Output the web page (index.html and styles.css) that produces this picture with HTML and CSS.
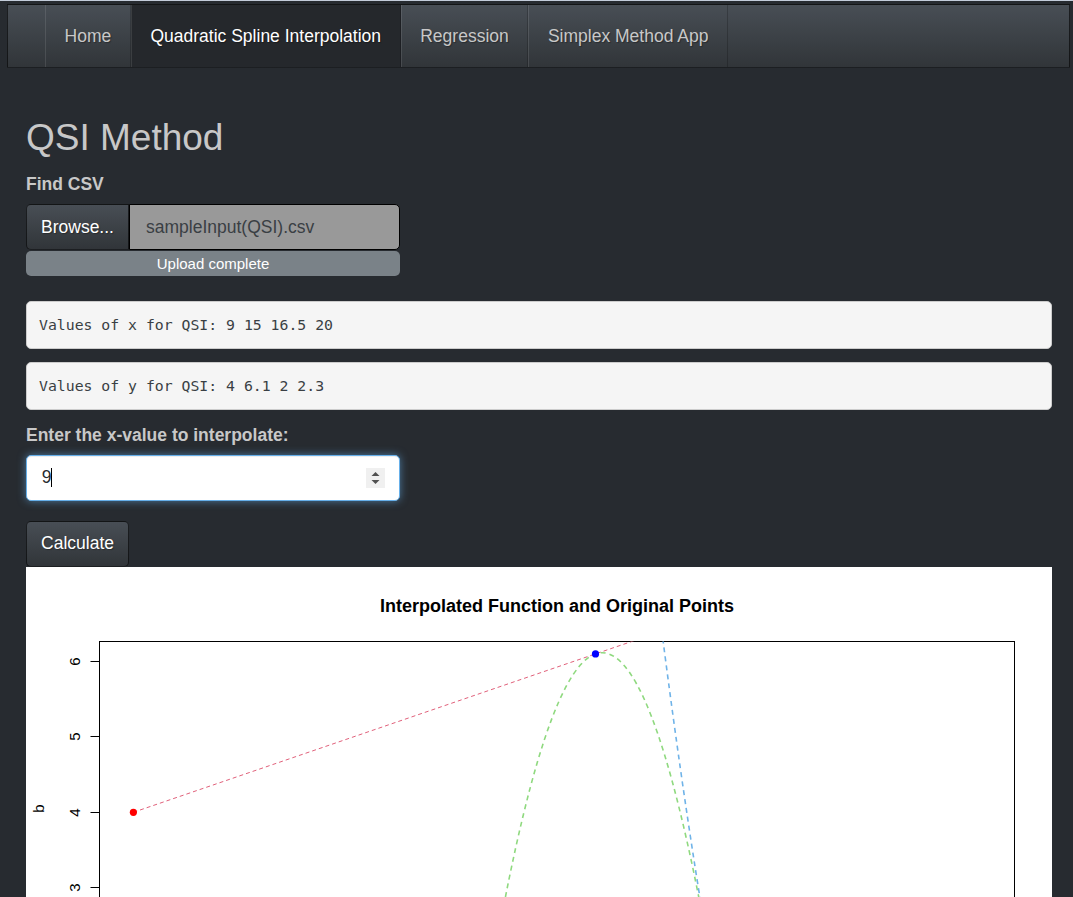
FILE: index.html
```html
<!DOCTYPE html>
<html lang="en">
<head>
<meta charset="utf-8">
<title>QSI Method</title>
<link rel="stylesheet" href="styles.css">
</head>
<body>
<nav class="navbar">
  <div class="navbar-brand"></div>
  <ul class="nav">
    <li class="nav-item"><a href="#">Home</a></li>
    <li class="nav-item active"><a href="#">Quadratic Spline Interpolation</a></li>
    <li class="nav-item"><a href="#">Regression</a></li>
    <li class="nav-item"><a href="#">Simplex Method App</a></li>
  </ul>
</nav>
<main class="container">
  <h1 class="page-title">QSI Method</h1>
  <div class="form-group file-form">
    <label class="control-label">Find CSV</label>
    <div class="file-group">
      <span class="btn btn-browse">Browse...</span>
      <div class="file-name">sampleInput(QSI).csv</div>
    </div>
    <div class="progress">Upload complete</div>
  </div>
  <pre class="verbatim">Values of x for QSI: 9 15 16.5 20</pre>
  <pre class="verbatim">Values of y for QSI: 4 6.1 2 2.3</pre>
  <div class="form-group num-form">
    <label class="control-label">Enter the x-value to interpolate:</label>
    <div class="num-input">
      <span class="num-value">9</span><span class="caret"></span>
      <svg class="spinner" width="19" height="20" viewBox="0 0 19 20">
        <rect x="0" y="0" width="19" height="20" fill="#f0f0f0"/>
        <polygon points="5.5,8 13.5,8 9.5,4" fill="#505050"/>
        <polygon points="5.5,12 13.5,12 9.5,16" fill="#505050"/>
      </svg>
    </div>
  </div>
  <button class="btn btn-calc" type="button">Calculate</button>
  <div class="plot">
    <svg class="plot-svg" width="1026" height="500" viewBox="0 0 1026 500">
      <defs>
        <clipPath id="plotclip"><rect x="73.5" y="74.5" width="915" height="334"/></clipPath>
      </defs>
      <text class="plot-title" x="531" y="45" text-anchor="middle">Interpolated Function and Original Points</text>
      <rect x="73.5" y="74.5" width="915" height="334" fill="none" stroke="#000" stroke-width="1"/>
      <g stroke="#000" stroke-width="1">
        <line x1="73.5" y1="94.5" x2="73.5" y2="396.5"/>
        <line x1="64.5" y1="94.5" x2="73.5" y2="94.5"/>
        <line x1="64.5" y1="169.5" x2="73.5" y2="169.5"/>
        <line x1="64.5" y1="245.5" x2="73.5" y2="245.5"/>
        <line x1="64.5" y1="320.5" x2="73.5" y2="320.5"/>
        <line x1="64.5" y1="396.5" x2="73.5" y2="396.5"/>
      </g>
      <g class="axis-label" text-anchor="middle">
        <text transform="translate(53.5,94.5) rotate(-90)">6</text>
        <text transform="translate(53.5,169.5) rotate(-90)">5</text>
        <text transform="translate(53.5,245.5) rotate(-90)">4</text>
        <text transform="translate(53.5,320.5) rotate(-90)">3</text>
        <text transform="translate(17.5,241.5) rotate(-90)">b</text>
      </g>
      <g clip-path="url(#plotclip)" fill="none">
        <line x1="107.4" y1="245.3" x2="954.6" y2="-45.1" stroke="#e0607a" stroke-width="1" stroke-dasharray="4 3"/>
        <path d="M461.7 427.7 Q575.3 -251.6 688.9 418.5" stroke="#8fd97f" stroke-width="1.6" stroke-dasharray="5 4"/>
        <path d="M631.1 26.7 Q661.9 273.4 692.7 438.7" stroke="#6fb3e8" stroke-width="1.6" stroke-dasharray="5 4"/>
      </g>
      <g>
        <circle cx="569.5" cy="86.9" r="3.6" fill="#0000FF"/>
        <circle cx="685.0" cy="396.1" r="3.6" fill="#0000FF"/>
        <circle cx="954.6" cy="373.5" r="3.6" fill="#0000FF"/>
        <circle cx="107.4" cy="245.3" r="3.6" fill="#FF0000"/>
      </g>
    </svg>
  </div>
</main>
</body>
</html>
```
FILE: styles.css
```css
html {
  overflow: hidden;
}

body {
  margin: 0;
  background: #272b30;
  color: #c8c8c8;
  font-family: "Liberation Sans", Arial, sans-serif;
  font-size: 17.5px;
  line-height: 1.42857;
  border-top: 1px solid #c3ccda;
}

.navbar {
  display: flex;
  height: 64px;
  box-sizing: border-box;
  margin: 3px 3px 0 7px;
  border: 1px solid rgba(0, 0, 0, 0.6);
  background-image: linear-gradient(#484e55, #3a3f44 60%, #313539);
}

.navbar-brand {
  width: 37px;
  flex: none;
}

.nav {
  display: flex;
  list-style: none;
  margin: 0;
  padding: 0;
}

.nav-item a {
  display: block;
  padding: 0 18.6px;
  line-height: 62px;
  color: #c8c8c8;
  text-decoration: none;
  border-left: 1px solid rgba(255, 255, 255, 0.1);
  border-right: 1px solid rgba(0, 0, 0, 0.2);
  text-shadow: 1px 1px 1px rgba(0, 0, 0, 0.3);
}

.nav-item.active a {
  color: #fff;
  background: #25282c;
}

.container {
  padding: 0 21px 0 26px;
}

.page-title {
  font-size: 37px;
  font-weight: 400;
  line-height: 1.1;
  margin: 49.5px 0 13.5px;
  color: #c8c8c8;
}

.control-label {
  display: block;
  font-weight: bold;
  margin-bottom: 6.5px;
}

.file-form .control-label {
  margin-bottom: 7.5px;
}

.file-form {
  margin-bottom: 25px;
}

.file-group {
  display: flex;
  width: 374px;
  height: 46px;
}

.btn {
  box-sizing: border-box;
  border: 1px solid rgba(0, 0, 0, 0.6);
  background-image: linear-gradient(#484e55, #3a3f44 60%, #313539);
  color: #fff;
  font-family: "Liberation Sans", Arial, sans-serif;
  font-size: 17.5px;
  text-shadow: 1px 1px 1px rgba(0, 0, 0, 0.3);
  display: flex;
  align-items: center;
  justify-content: center;
}

.btn-browse {
  width: 103px;
  flex: none;
  border-radius: 5px 0 0 5px;
}

.file-name {
  flex: 1;
  box-sizing: border-box;
  background: #999999;
  border: 1px solid #000;
  border-radius: 0 5px 5px 0;
  padding-left: 16px;
  color: #3a3f44;
  display: flex;
  align-items: center;
}

.progress {
  margin-top: 1px;
  width: 374px;
  height: 25px;
  line-height: 25px;
  border-radius: 5px;
  background: #7a8288;
  color: #fff;
  font-size: 15px;
  text-align: center;
}

.verbatim {
  box-sizing: border-box;
  height: 48px;
  margin: 0 0 13px;
  padding: 11px 12px;
  line-height: 24px;
  font-family: "DejaVu Sans Mono", "Liberation Mono", monospace;
  font-size: 14.8px;
  background: #f5f5f5;
  border: 1px solid #cccccc;
  border-radius: 5px;
  color: #3a3f44;
  white-space: pre;
}

.num-form {
  margin-bottom: 20px;
}

.num-input {
  box-sizing: border-box;
  width: 374px;
  height: 46px;
  border: 1px solid #66afe9;
  border-radius: 5px;
  background: #fff;
  box-shadow: inset 0 1px 1px rgba(0, 0, 0, 0.075), 0 0 8px rgba(102, 175, 233, 0.6);
  display: flex;
  align-items: center;
  padding: 0 14px 0 14.7px;
  color: #272b30;
}

.caret {
  width: 1px;
  height: 19px;
  background: #000;
}

.spinner {
  margin-left: auto;
  display: block;
}

.btn-calc {
  width: 103px;
  height: 46px;
  border-radius: 5px;
  padding: 0;
}

.plot {
  background: #fff;
  height: 500px;
}

.plot-svg {
  display: block;
  font-family: "Liberation Sans", Arial, sans-serif;
}

.plot-title {
  font-size: 18px;
  font-weight: bold;
  fill: #000;
}

.axis-label text {
  font-size: 15px;
  fill: #000;
}
```
